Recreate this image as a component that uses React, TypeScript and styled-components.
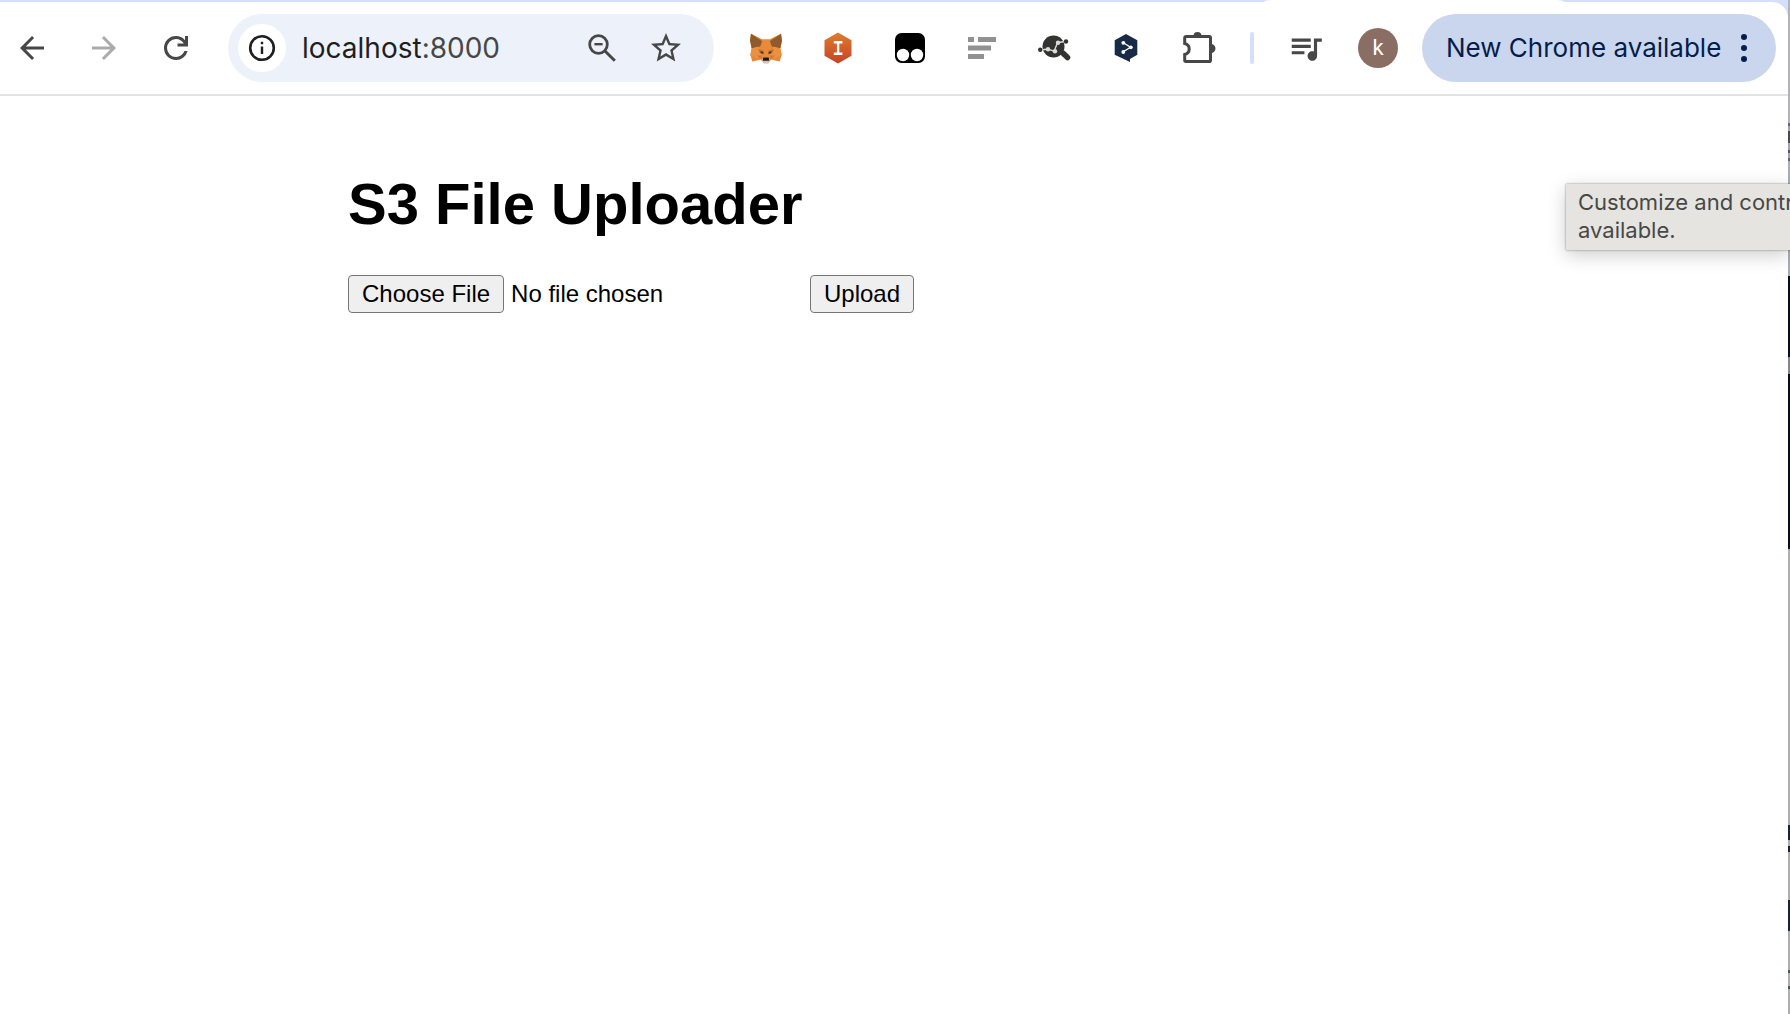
import React from "react";
import styled, { createGlobalStyle } from "styled-components";

const ui = `Inter, "Noto Sans", sans-serif`;
const arial = `"Liberation Sans", Arial, sans-serif`;

const GlobalStyle = createGlobalStyle`
  *, *::before, *::after { box-sizing: border-box; }
  body { margin: 0; background: #fff; overflow: hidden; }
  button, input { font: inherit; color: inherit; }
`;

const Desktop = styled.div`
  position: relative;
  display: flex;
  min-height: 100vh;
  overflow: hidden;
  background: #fff;
`;

const Browser = styled.div`
  display: flex;
  flex-direction: column;
  flex: 1;
  min-width: 0;
`;

const DesktopEdge = styled.div`
  flex: none;
  width: 2px;
  background: linear-gradient(
    #b2b3b6 123px, #5d6680 123px 126px, #a3a5aa 126px 131px, #4a4a4e 131px 143px,
    #a3a5aa 143px 150px, #55565c 150px 153px, #a3a5aa 153px 158px, #5d6680 158px 161px,
    #a9abb3 161px 276px, #060e1e 276px 357px, #85878c 357px 374px, #060e1e 374px 549px,
    #adadad 549px 825px, #1b2233 825px 840px, #adadad 840px 846px, #1b2233 846px 852px,
    #adadad 852px 900px, #1b2233 900px 931px, #adadad 931px 970px, #4e5563 970px 973px,
    #adadad 973px 986px, #4e5563 986px 989px, #adadad 989px
  );
`;

const Frame = styled.header`
  background: #d4e0fb;
`;

const TabStrip = styled.div`
  display: flex;
  justify-content: flex-end;
  height: 2px;
  padding-right: 224px;
`;

const ActiveTab = styled.div`
  width: 300px;
  background: #fff;
  border-radius: 8px 8px 0 0 / 2px 2px 0 0;
`;

const Toolbar = styled.div`
  display: flex;
  align-items: center;
  height: 94px;
  padding: 0 12px 0 4px;
  background: #fff;
  border-bottom: 2px solid #e2e2e2;
  border-top-right-radius: 16px;
`;

const Group = styled.div<{ $gap?: number }>`
  display: flex;
  align-items: center;
  gap: ${(p) => p.$gap ?? 0}px;
`;

const IconButton = styled.button<{ $width?: number }>`
  display: flex;
  align-items: center;
  justify-content: center;
  flex: none;
  width: ${(p) => p.$width ?? 56}px;
  height: 56px;
  padding: 0;
  border: 0;
  background: none;
  color: #474747;
  &:disabled { color: #ababab; }
`;

const Omnibox = styled.div`
  display: flex;
  align-items: center;
  flex: 1;
  min-width: 0;
  height: 68px;
  margin: 0 16px 0 24px;
  padding: 0 20px 0 10px;
  border-radius: 34px;
  background: #edf2fa;
`;

const SiteInfo = styled.button`
  display: flex;
  align-items: center;
  justify-content: center;
  flex: none;
  width: 48px;
  height: 48px;
  padding: 0;
  border: 0;
  border-radius: 50%;
  background: #fff;
  color: #1f1f1f;
`;

const Address = styled.a`
  flex: 1;
  min-width: 0;
  padding-left: 16px;
  font: 400 28px/36px ${ui};
  color: #1f1f1f;
  text-decoration: none;
  white-space: nowrap;
`;

const Port = styled.span`
  color: #474747;
`;

const Divider = styled.div`
  flex: none;
  width: 4px;
  height: 32px;
  margin: 0 16px;
  border-radius: 2px;
  background: #d4e0fb;
`;

const Avatar = styled.span`
  display: flex;
  align-items: center;
  justify-content: center;
  width: 40px;
  height: 40px;
  border-radius: 50%;
  background: #8a6e64;
  color: #fff;
  font: 400 22px/28px Roboto, sans-serif;
`;

const UpdateChip = styled.button`
  display: flex;
  align-items: center;
  justify-content: space-between;
  flex: none;
  width: 354px;
  height: 68px;
  margin-left: 8px;
  padding: 0 28px 0 24px;
  border: 0;
  border-radius: 34px;
  background: #cad6ee;
  color: #041e49;
  font: 400 26px/32px ${ui};
  white-space: nowrap;
`;

const Page = styled.main`
  width: 100%;
  max-width: 1092px;
  margin: 0 auto;
  padding-top: 75px;
  color: #000;
  font: 400 24px/28px ${arial};
`;

const Title = styled.h1`
  margin: 0 0 38px;
  font: 700 58px/66px ${arial};
`;

const UploadForm = styled.form`
  display: flex;
  align-items: center;
  gap: 7px;
`;

const FileInput = styled.input`
  width: 455px;
  height: 38px;
  &::file-selector-button {
    height: 38px;
    margin: 0 7px 0 0;
    padding: 0 13px;
    border: 1px solid #767676;
    border-radius: 4px;
    background: #efefef;
    color: #000;
    font: 400 24px/28px ${arial};
  }
`;

const SubmitButton = styled.button`
  height: 38px;
  padding: 0 13px;
  border: 1px solid #767676;
  border-radius: 4px;
  background: #efefef;
`;

const Tooltip = styled.div`
  position: absolute;
  top: 184px;
  right: 0;
  width: 224px;
  padding: 4px 0 6px 12px;
  background: #e5e4e0;
  color: #484846;
  font: 400 22px/28px ${ui};
  white-space: nowrap;
  box-shadow: 0 0 2px rgba(0, 0, 0, 0.45), 0 5px 18px rgba(0, 0, 0, 0.2);
`;

const Glyph = ({ d, size = 36 }: { d: string; size?: number }) => (
  <svg width={size} height={size} viewBox="0 0 24 24" fill="currentColor" aria-hidden="true">
    <path d={d} />
  </svg>
);

const paths = {
  back: "M20 11H7.83l5.59-5.59L12 4l-8 8 8 8 1.41-1.41L7.83 13H20z",
  forward: "M4 11h12.17l-5.59-5.59L12 4l8 8-8 8-1.41-1.41L16.17 13H4z",
  reload:
    "M12 20q-3.35 0-5.675-2.325T4 12t2.325-5.675T12 4q1.725 0 3.3.712T18 6.75V4h2v7h-7V9h4.2q-.8-1.4-2.187-2.2T12 6Q9.5 6 7.75 7.75T6 12t1.75 4.25T12 18q1.925 0 3.475-1.1T17.65 14h2.1q-.7 2.65-2.85 4.325T12 20",
  star: "M22 9.24l-7.19-.62L12 2 9.19 8.63 2 9.24l5.46 4.73L5.82 21 12 17.27 18.18 21l-1.63-7.03L22 9.24zM12 15.4l-3.76 2.27 1-4.28-3.32-2.88 4.38-.38L12 6.1l1.71 4.04 4.38.38-3.32 2.88 1 4.28L12 15.4z",
  queue:
    "M15 6H3v2h12V6zm0 4H3v2h12v-2zM3 16h8v-2H3v2zM17 6v8.18c-.31-.11-.65-.18-1-.18-1.66 0-3 1.34-3 3s1.34 3 3 3 3-1.34 3-3V8h3V6h-5z",
};

const InfoIcon = () => (
  <svg width="28" height="28" viewBox="0 0 28 28" aria-hidden="true">
    <circle cx="14" cy="14" r="11.8" fill="none" stroke="currentColor" strokeWidth="2.6" />
    <path d="M12.8 12.5h2.4v7.5h-2.4zM12.8 7.8h2.4v2.4h-2.4z" fill="currentColor" />
  </svg>
);

const ZoomOutIcon = () => (
  <svg width="30" height="30" viewBox="0 0 30 30" fill="none" stroke="currentColor" aria-hidden="true">
    <circle cx="11.5" cy="11.5" r="8.8" strokeWidth="2.8" />
    <path d="M18 18l9.8 9.8" strokeWidth="3" />
    <path d="M7.4 11.2h8.2" strokeWidth="2.4" />
  </svg>
);

const FoxIcon = () => (
  <svg width="32" height="31" viewBox="0 0 96 92" aria-hidden="true">
    <path d="M3 2l35 17h20L93 2l3 20-5 25 4 18-6 20-26-6-8 11H41l-8-11-26 6L1 65l4-18L0 22z" fill="#e58735" />
    <path d="M3 2l36 24-8 14-26 5L0 22zM93 2L57 26l8 14 26 5 5-23z" fill="#8e5a30" />
    <path d="M38 19h20l7 21-8 33H39l-8-33z" fill="#e88a38" />
    <path d="M5 46l20-6 12 22-14 14-22-10zM91 46l-20-6-12 22 14 14 22-10z" fill="#ec9140" />
    <path d="M24 48l16 4 2 12-12-4zM72 48l-16 4-2 12 12-4z" fill="#c8682b" />
    <path d="M20 66l14 2 1 12zM76 66l-14 2-1 12z" fill="#d5733a" />
    <path d="M31 55l8 1 2 5-8-1zM65 55l-8 1-2 5 8-1z" fill="#2b3540" />
    <path d="M34 81l7-7h14l7 7-8 9H42z" fill="#d5c4b3" />
    <path d="M40 73h16l2 10H38z" fill="#16181c" />
  </svg>
);

const HexIcon = () => (
  <svg width="28" height="32" viewBox="0 0 28 32" aria-hidden="true">
    <defs>
      <linearGradient id="hex" x1="0" y1="0" x2="0" y2="1">
        <stop offset="0" stopColor="#dd7d31" />
        <stop offset="1" stopColor="#c84124" />
      </linearGradient>
    </defs>
    <path d="M14 .5l13.5 7.8v15.4L14 31.5.5 23.7V8.3z" fill="url(#hex)" />
    <path d="M9.8 10.2h8.6M14.1 10.2v11.6M9.8 21.8h8.6" stroke="#fff" strokeWidth="2.4" />
  </svg>
);

const MonkeyIcon = () => (
  <svg width="30" height="30" viewBox="0 0 30 30" aria-hidden="true">
    <rect width="30" height="30" rx="6.5" fill="#000" />
    <circle cx="8" cy="22" r="6.2" fill="#fff" />
    <circle cx="22" cy="22" r="6.2" fill="#fff" />
  </svg>
);

const LinesIcon = () => (
  <svg width="28" height="24" viewBox="0 0 28 24" fill="#919191" aria-hidden="true">
    <path d="M0 1h6v5H0zM10 1h18v5H10zM0 9.5h23v5H0zM0 18h16v5H0z" />
  </svg>
);

const AnalysisIcon = () => (
  <svg width="34" height="28" viewBox="0 0 34 28" aria-hidden="true">
    <circle cx="16.5" cy="12.5" r="11" fill="#333330" />
    <path d="M26.500 19.500l4 4" stroke="#333330" strokeWidth="5.5" strokeLinecap="round" />
    <path d="M22.500 18l4 4" stroke="#333330" strokeWidth="2" />
    <path d="M4 15.7l7-.5 6 2 3.6-8.5 7-1.2" fill="none" stroke="#dcdcdc" strokeWidth="1.4" />
    <circle cx="3.2" cy="15.8" r="2.2" fill="#333330" />
    <circle cx="29" cy="7.5" r="2.2" fill="#333330" />
    <circle cx="11" cy="15.2" r="2.2" fill="#dcdcdc" />
    <circle cx="18" cy="17.3" r="2.2" fill="#dcdcdc" />
    <circle cx="21" cy="8.7" r="2.2" fill="#dcdcdc" />
  </svg>
);

const TranslateIcon = () => (
  <svg width="24" height="28" viewBox="0 0 24 28" aria-hidden="true">
    <path d="M12 0l11.3 6.3v14.500L16 25v3L.7 20.8V6.300z" fill="#172a46" />
    <path d="M9.3 8.8l7.2 4.5-7.2 4.500" fill="none" stroke="#fff" strokeWidth="1.3" />
    <circle cx="9.3" cy="8.8" r="1.9" fill="#fff" />
    <circle cx="16.8" cy="13.3" r="1.9" fill="#fff" />
    <circle cx="9.3" cy="18" r="1.9" fill="#fff" />
  </svg>
);

const PuzzleIcon = () => (
  <svg width="34" height="34" viewBox="-1 2 34 34" overflow="visible" aria-hidden="true">
    <path
      d="M4 7.5h23.2a1.3 1.3 0 0 1 1.3 1.3v22.400a1.3 1.3 0 0 1-1.3 1.3H4a1.3 1.3 0 0 1-1.3-1.3V25.500c6-1.500 6-9.500 0-11V8.800A1.3 1.3 0 0 1 4 7.5z"
      fill="none"
      stroke="currentColor"
      strokeWidth="3"
    />
    <path d="M11.5 7a4 4 0 0 1 8 0zM29 15a4.5 4.5 0 0 1 0 9z" fill="currentColor" />
  </svg>
);

const DotsIcon = () => (
  <svg width="8" height="28" viewBox="0 0 8 28" fill="currentColor" aria-hidden="true">
    <circle cx="4" cy="3" r="3" />
    <circle cx="4" cy="14" r="3" />
    <circle cx="4" cy="25" r="3" />
  </svg>
);

const extensions = [
  { name: "Wallet", Icon: FoxIcon },
  { name: "Inspector", Icon: HexIcon },
  { name: "User scripts", Icon: MonkeyIcon },
  { name: "Reader", Icon: LinesIcon },
  { name: "Analysis", Icon: AnalysisIcon },
  { name: "Translate", Icon: TranslateIcon },
  { name: "Extensions", Icon: PuzzleIcon },
];

export default function App() {
  return (
    <Desktop>
      <GlobalStyle />
      <Browser>
        <Frame>
          <TabStrip>
            <ActiveTab />
          </TabStrip>
          <Toolbar>
            <Group $gap={16}>
              <IconButton aria-label="Back"><Glyph d={paths.back} /></IconButton>
              <IconButton aria-label="Forward" disabled><Glyph d={paths.forward} /></IconButton>
              <IconButton aria-label="Reload"><Glyph d={paths.reload} /></IconButton>
            </Group>
            <Omnibox>
              <SiteInfo aria-label="Site information"><InfoIcon /></SiteInfo>
              <Address href="#">localhost<Port>:8000</Port></Address>
              <Group $gap={8}>
                <IconButton aria-label="Zoom"><ZoomOutIcon /></IconButton>
                <IconButton aria-label="Bookmark"><Glyph d={paths.star} /></IconButton>
              </Group>
            </Omnibox>
            <Group>
              {extensions.map(({ name, Icon }) => (
                <IconButton key={name} aria-label={name} $width={72}><Icon /></IconButton>
              ))}
            </Group>
            <Divider />
            <IconButton aria-label="Media" $width={72}><Glyph d={paths.queue} size={38} /></IconButton>
            <IconButton aria-label="Profile" $width={72}><Avatar>k</Avatar></IconButton>
            <UpdateChip>
              New Chrome available
              <DotsIcon />
            </UpdateChip>
          </Toolbar>
        </Frame>
        <Page>
          <Title>S3 File Uploader</Title>
          <UploadForm onSubmit={(e) => e.preventDefault()}>
            <FileInput type="file" aria-label="File to upload" />
            <SubmitButton type="submit">Upload</SubmitButton>
          </UploadForm>
        </Page>
      </Browser>
      <DesktopEdge />
      <Tooltip role="tooltip">
        Customize and contr
        <br />
        available.
      </Tooltip>
    </Desktop>
  );
}
